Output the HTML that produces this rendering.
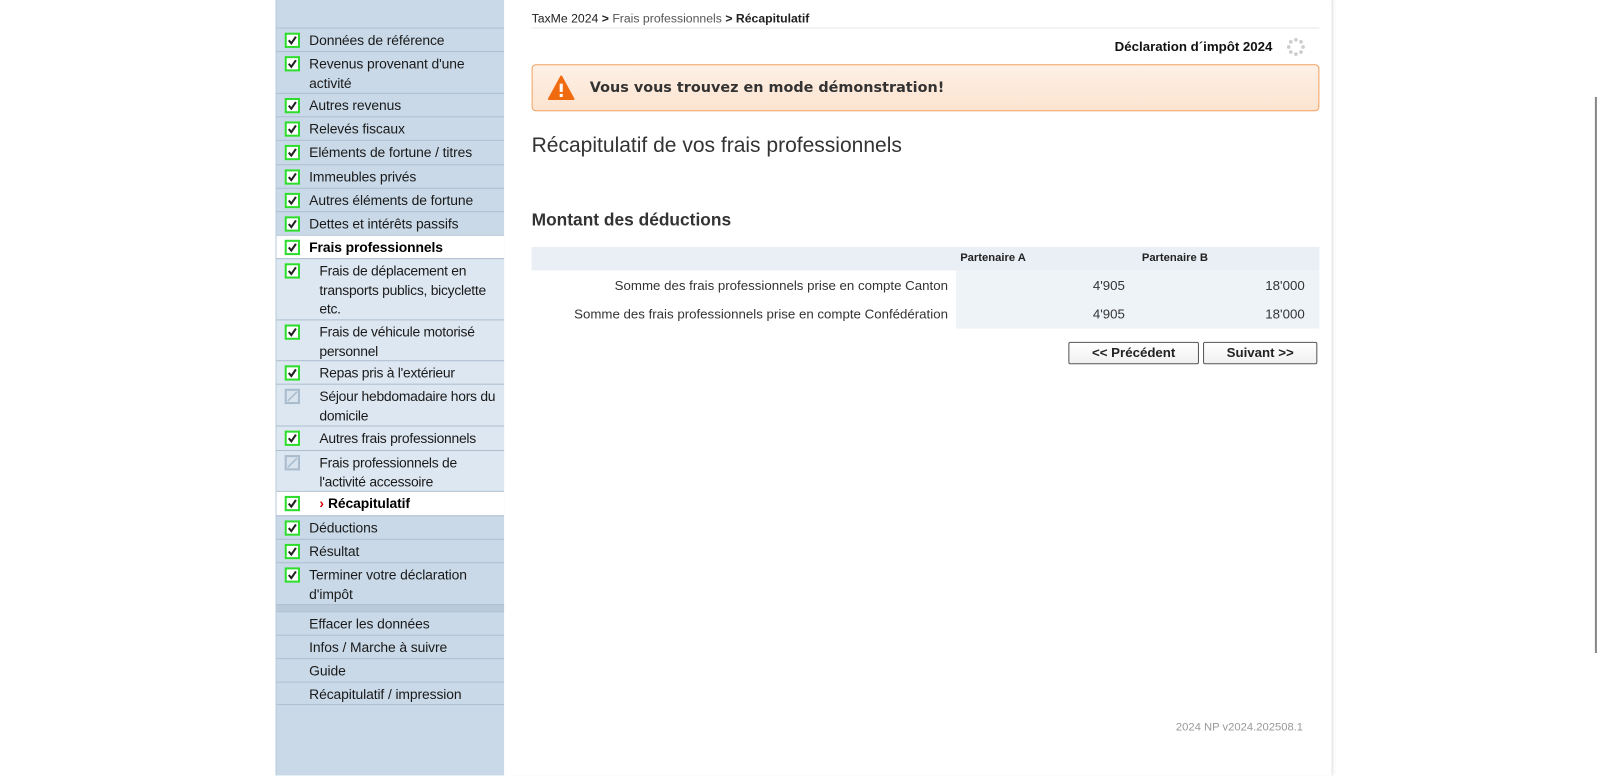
<!DOCTYPE html>
<html><head><meta charset="utf-8"><style>
*{margin:0;padding:0;box-sizing:border-box}
body{width:1600px;height:760px;background:#fff;font-family:"Liberation Sans",Arial,sans-serif;font-size:14px;color:#222;position:relative;overflow:hidden}
#wrap{position:absolute;left:0;top:0;width:1568px;height:745px;transform:scale(1.0204);transform-origin:0 0}
#side{position:absolute;left:270px;top:0;width:224px;height:760px;background:#c9d9e8;border-left:1px solid #b8c8d8;font-size:13.6px}
.r{position:relative;border-top:1px solid #aebfd0;padding:3px 6px 0 32px;line-height:18.5px;color:#1a1a1a;letter-spacing:-0.1px}
.r.s{padding-left:42px;padding-right:2px;background:#dde7f1;letter-spacing:-0.25px}
.r.w{background:#fff}
.cb{position:absolute;left:8px;top:4px;width:15px;height:15px;border:2px solid #2edc2e;background:#fff}
.cb svg{position:absolute;left:0;top:0}
.cb.g{border:2px solid #a9bccd;background:#d8e3ee}
#main{position:absolute;left:494px;top:0;width:812px;height:760px;border-right:1px solid #e3e3e3;box-shadow:2px 0 3px rgba(0,0,0,.06)}
</style></head><body><div id="wrap">
<div id="side">
<div style="height:27px"></div>
<div class="r" style="height:23px"><span class="cb"><svg width="11" height="11"><path d="M2 5.5L4.5 8.5L9 2" stroke="#222" stroke-width="2" fill="none"/></svg></span>Données de référence</div>
<div class="r" style="height:41px"><span class="cb"><svg width="11" height="11"><path d="M2 5.5L4.5 8.5L9 2" stroke="#222" stroke-width="2" fill="none"/></svg></span>Revenus provenant d'une activité</div>
<div class="r" style="height:23px"><span class="cb"><svg width="11" height="11"><path d="M2 5.5L4.5 8.5L9 2" stroke="#222" stroke-width="2" fill="none"/></svg></span>Autres revenus</div>
<div class="r" style="height:23px"><span class="cb"><svg width="11" height="11"><path d="M2 5.5L4.5 8.5L9 2" stroke="#222" stroke-width="2" fill="none"/></svg></span>Relevés fiscaux</div>
<div class="r" style="height:24px"><span class="cb"><svg width="11" height="11"><path d="M2 5.5L4.5 8.5L9 2" stroke="#222" stroke-width="2" fill="none"/></svg></span>Eléments de fortune / titres</div>
<div class="r" style="height:23px"><span class="cb"><svg width="11" height="11"><path d="M2 5.5L4.5 8.5L9 2" stroke="#222" stroke-width="2" fill="none"/></svg></span>Immeubles privés</div>
<div class="r" style="height:23px"><span class="cb"><svg width="11" height="11"><path d="M2 5.5L4.5 8.5L9 2" stroke="#222" stroke-width="2" fill="none"/></svg></span>Autres éléments de fortune</div>
<div class="r" style="height:23px"><span class="cb"><svg width="11" height="11"><path d="M2 5.5L4.5 8.5L9 2" stroke="#222" stroke-width="2" fill="none"/></svg></span>Dettes et intérêts passifs</div>
<div class="r w" style="height:23px;font-weight:bold;color:#000"><span class="cb"><svg width="11" height="11"><path d="M2 5.5L4.5 8.5L9 2" stroke="#222" stroke-width="2" fill="none"/></svg></span>Frais professionnels</div>
<div class="r s" style="height:60px"><span class="cb"><svg width="11" height="11"><path d="M2 5.5L4.5 8.5L9 2" stroke="#222" stroke-width="2" fill="none"/></svg></span>Frais de déplacement en transports publics, bicyclette etc.</div>
<div class="r s" style="height:40px"><span class="cb"><svg width="11" height="11"><path d="M2 5.5L4.5 8.5L9 2" stroke="#222" stroke-width="2" fill="none"/></svg></span>Frais de véhicule motorisé personnel</div>
<div class="r s" style="height:23px"><span class="cb"><svg width="11" height="11"><path d="M2 5.5L4.5 8.5L9 2" stroke="#222" stroke-width="2" fill="none"/></svg></span>Repas pris à l'extérieur</div>
<div class="r s" style="height:41px"><span class="cb g"><svg width="11" height="11"><path d="M1 10L10 1" stroke="#a9bccd" stroke-width="1.5"/></svg></span>Séjour hebdomadaire hors du domicile</div>
<div class="r s" style="height:24px"><span class="cb"><svg width="11" height="11"><path d="M2 5.5L4.5 8.5L9 2" stroke="#222" stroke-width="2" fill="none"/></svg></span>Autres frais professionnels</div>
<div class="r s" style="height:40px"><span class="cb g"><svg width="11" height="11"><path d="M1 10L10 1" stroke="#a9bccd" stroke-width="1.5"/></svg></span>Frais professionnels de l'activité accessoire</div>
<div class="r w" style="height:24px;font-weight:bold;color:#000;padding-left:42px"><span class="cb"><svg width="11" height="11"><path d="M2 5.5L4.5 8.5L9 2" stroke="#222" stroke-width="2" fill="none"/></svg></span><span style="color:#d00;margin-right:4px">&#x203A;</span>Récapitulatif</div>
<div class="r" style="height:23px"><span class="cb"><svg width="11" height="11"><path d="M2 5.5L4.5 8.5L9 2" stroke="#222" stroke-width="2" fill="none"/></svg></span>Déductions</div>
<div class="r" style="height:23px"><span class="cb"><svg width="11" height="11"><path d="M2 5.5L4.5 8.5L9 2" stroke="#222" stroke-width="2" fill="none"/></svg></span>Résultat</div>
<div class="r" style="height:41px"><span class="cb"><svg width="11" height="11"><path d="M2 5.5L4.5 8.5L9 2" stroke="#222" stroke-width="2" fill="none"/></svg></span>Terminer votre déclaration d'impôt</div>
<div style="height:7px;background:#b9cadb;border-top:1px solid #aebfd0"></div>
<div class="r" style="height:23px">Effacer les données</div>
<div class="r" style="height:23px">Infos / Marche à suivre</div>
<div class="r" style="height:23px">Guide</div>
<div class="r" style="height:23px;border-bottom:1px solid #aebfd0">Récapitulatif / impression</div>
</div>
<div id="main">
<div style="position:absolute;left:27px;top:11px;font-size:12px;color:#222">TaxMe 2024 <b>&gt;</b> <span style="color:#555">Frais professionnels</span> <b>&gt; Récapitulatif</b></div>
<div style="position:absolute;left:27px;top:27px;width:772px;border-top:1px solid #e4e8ec"></div>
<div style="position:absolute;right:58px;top:38px;font-size:13px;font-weight:bold;color:#111">Déclaration d´impôt 2024</div>
<svg style="position:absolute;left:766px;top:36px" width="20" height="20"><g fill="#ccc"><circle cx="10" cy="3" r="1.8"/><circle cx="15" cy="5" r="1.8"/><circle cx="17" cy="10" r="1.8"/><circle cx="15" cy="15" r="1.8"/><circle cx="10" cy="17" r="1.8"/><circle cx="5" cy="15" r="1.8"/><circle cx="3" cy="10" r="1.8"/><circle cx="5" cy="5" r="1.8"/></g></svg>
<div style="position:absolute;left:27px;top:63px;width:772px;height:46px;border:1px solid #f0a060;border-radius:4px;background:linear-gradient(#fdf0e6,#fde4d0)">
<svg style="position:absolute;left:15px;top:10px" width="26" height="24"><path d="M13 1L25 23H1Z" fill="#f06a10" stroke="#f06a10" stroke-linejoin="round" stroke-width="2"/><rect x="11.5" y="8" width="3" height="8" fill="#fff"/><rect x="11.5" y="18" width="3" height="3" fill="#fff"/></svg>
<div style="position:absolute;left:56px;top:14px;font-family:'DejaVu Sans',sans-serif;font-weight:bold;font-size:14.1px;color:#333">Vous vous trouvez en mode démonstration!</div>
</div>
<div style="position:absolute;left:27px;top:131px;font-size:20.6px;color:#333">Récapitulatif de vos frais professionnels</div>
<div style="position:absolute;left:27px;top:206px;font-size:17px;font-weight:bold;color:#333">Montant des déductions</div>
<div style="position:absolute;left:27px;top:242px;width:772px;height:23px;background:#e9eff5"></div>
<div style="position:absolute;left:443px;top:265px;width:356px;height:57px;background:#eef3f8"></div>
<div style="position:absolute;left:447px;top:247px;font-size:11px;font-weight:bold">Partenaire A</div>
<div style="position:absolute;left:625px;top:247px;font-size:11px;font-weight:bold">Partenaire B</div>
<div style="position:absolute;right:376px;top:272px;font-size:13px;color:#333">Somme des frais professionnels prise en compte Canton</div>
<div style="position:absolute;right:376px;top:300px;font-size:13px;color:#333">Somme des frais professionnels prise en compte Confédération</div>
<div style="position:absolute;left:577px;top:272px;font-size:13px;color:#333">4'905</div>
<div style="position:absolute;left:577px;top:300px;font-size:13px;color:#333">4'905</div>
<div style="position:absolute;left:746px;top:272px;font-size:13px;color:#333">18'000</div>
<div style="position:absolute;left:746px;top:300px;font-size:13px;color:#333">18'000</div>
<div style="position:absolute;left:553px;top:335px;width:128px;height:22px;border:1px solid #555;border-radius:2px;text-align:center;font-weight:bold;font-size:13px;line-height:20px;background:linear-gradient(#fff,#f0f0f0)">&lt;&lt; Précédent</div>
<div style="position:absolute;left:685px;top:335px;width:112px;height:22px;border:1px solid #555;border-radius:2px;text-align:center;font-weight:bold;font-size:13px;line-height:20px;background:linear-gradient(#fff,#f0f0f0)">Suivant &gt;&gt;</div>
<div style="position:absolute;right:28px;top:707px;font-size:11px;color:#999">2024 NP v2024.202508.1</div>
</div>
<div style="position:absolute;left:1563px;top:95px;width:2px;height:545px;background:#888"></div>
</div></body></html>
